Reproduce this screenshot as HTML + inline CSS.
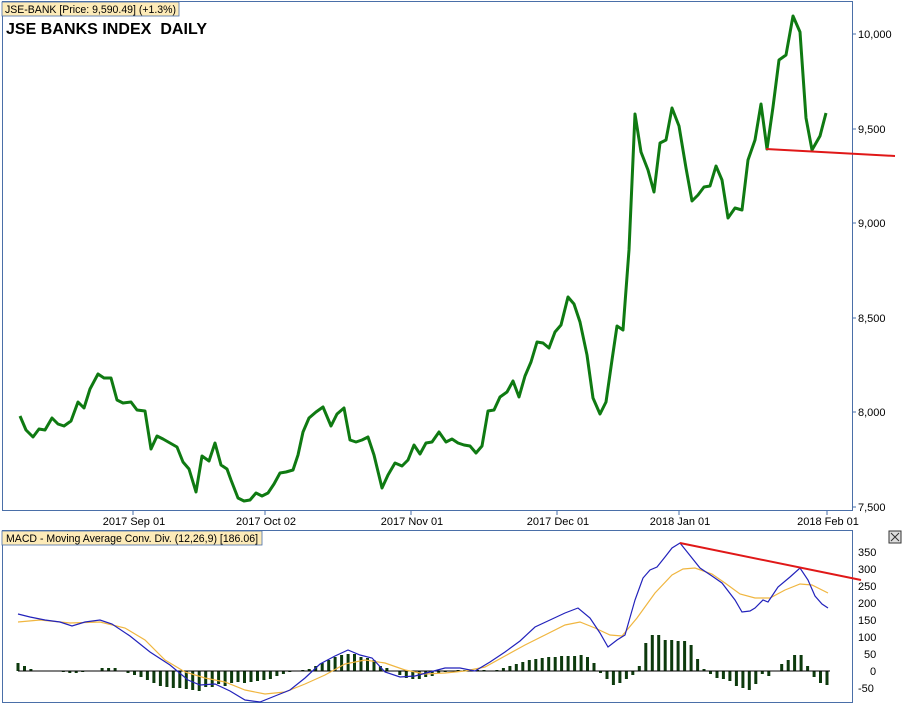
<!DOCTYPE html>
<html><head><meta charset="utf-8"><style>
html,body{margin:0;padding:0;background:#fff;width:902px;height:705px;overflow:hidden;font-family:"Liberation Sans",Arial,sans-serif}
svg{position:absolute;left:0;top:0}
</style></head><body>
<svg width="902" height="705" viewBox="0 0 902 705" xmlns="http://www.w3.org/2000/svg" font-family="Liberation Sans, Arial, sans-serif">
<rect x="0" y="0" width="902" height="705" fill="#fff"/>
<rect x="2.5" y="1.5" width="850" height="509" fill="#fff" stroke="#4a6fa8" stroke-width="1"/>
<rect x="2" y="2" width="177" height="14" fill="#fdebb8" stroke="#4a6fa8" stroke-width="0.8"/>
<text x="5" y="13" font-size="11" fill="#000" textLength="171" lengthAdjust="spacingAndGlyphs">JSE-BANK [Price: 9,590.49] (+1.3%)</text>
<text x="6" y="34" font-size="16" font-weight="bold" fill="#000" textLength="201" lengthAdjust="spacing" xml:space="preserve">JSE BANKS INDEX  DAILY</text>
<g font-size="11" fill="#000">
<line x1="852" y1="34" x2="856" y2="34" stroke="#4a6fa8"/><text x="858" y="38">10,000</text>
<line x1="852" y1="129" x2="856" y2="129" stroke="#4a6fa8"/><text x="858" y="133">9,500</text>
<line x1="852" y1="223" x2="856" y2="223" stroke="#4a6fa8"/><text x="858" y="227">9,000</text>
<line x1="852" y1="318" x2="856" y2="318" stroke="#4a6fa8"/><text x="858" y="322">8,500</text>
<line x1="852" y1="412" x2="856" y2="412" stroke="#4a6fa8"/><text x="858" y="416">8,000</text>
<line x1="852" y1="507" x2="856" y2="507" stroke="#4a6fa8"/><text x="858" y="511">7,500</text>
</g>
<g stroke="#4a6fa8">
<line x1="133" y1="511" x2="133" y2="515"/><line x1="265" y1="511" x2="265" y2="515"/><line x1="411" y1="511" x2="411" y2="515"/><line x1="557" y1="511" x2="557" y2="515"/><line x1="679" y1="511" x2="679" y2="515"/><line x1="827" y1="511" x2="827" y2="515"/>
</g>
<g font-size="11" fill="#000" text-anchor="middle">
<text x="134" y="525">2017 Sep 01</text><text x="266" y="525">2017 Oct 02</text><text x="412" y="525">2017 Nov 01</text><text x="558" y="525">2017 Dec 01</text><text x="680" y="525">2018 Jan 01</text><text x="828" y="525">2018 Feb 01</text>
</g>
<polyline fill="none" stroke="#0f7a12" stroke-width="3" stroke-linejoin="round" points="20,416 26,430 33,437 39,429 45,430 52,418 58,424 64,426 71,421 78,402 84,408 90,389 98,374 104,378 111,378 117,400 123,403 131,402 137,410 145,411 151,449 157,436 163,439 170,443 177,447 183,462 189,469 196,492 202,456 209,461 215,443 221,465 227,469 231,480 238,498 244,501 250,500 256,493 262,496 268,493 274,484 280,473 286,472 293,470 298,455 303,432 309,418 316,412 323,407 331,426 337,414 344,408 350,440 356,442 362,440 368,437 374,455 382,488 388,475 395,463 402,466 408,460 414,445 420,454 426,443 432,442 439,432 446,442 452,439 458,443 464,445 470,446 476,453 482,446 488,411 494,410 500,397 507,392 513,381 519,397 525,376 531,362 537,342 543,343 549,348 555,332 561,325 568,297 574,304 580,322 587,355 593,398 600,414 606,402 612,360 617,326 623,330 629,250 635,114 641,152 648,170 654,192 660,143 666,140 672,108 679,126 686,168 692,201 698,195 704,187 710,186 716,166 722,180 728,218 735,208 742,210 748,160 755,140 761,104 767,149 773,107 779,60 786,55 793,16 800,32 806,118 812,150 820,136 826,113"/>
<line x1="766" y1="149" x2="895" y2="156" stroke="#e01818" stroke-width="2"/>
<rect x="2.5" y="530.5" width="850" height="172" fill="#fff" stroke="#4a6fa8" stroke-width="1"/>
<rect x="2" y="531" width="260" height="14" fill="#fdebb8" stroke="#4a6fa8" stroke-width="0.8"/>
<text x="6" y="542" font-size="11" fill="#000" textLength="252" lengthAdjust="spacingAndGlyphs">MACD - Moving Average Conv. Div. (12,26,9) [186.06]</text>
<rect x="889" y="531" width="12" height="12" fill="#ddd" stroke="#333" stroke-width="1"/>
<path d="M891,533 L899,541 M899,533 L891,541" stroke="#333" stroke-width="1"/>
<g font-size="11" fill="#000">
<text x="858" y="556">350</text><text x="858" y="573">300</text><text x="858" y="590">250</text><text x="858" y="607">200</text><text x="858" y="624">150</text><text x="858" y="641">100</text><text x="864" y="658">50</text><text x="870" y="675">0</text><text x="858" y="692">-50</text>
</g>
<g id="hist" fill="#0d3a0d"></g>
<line x1="18" y1="671" x2="830" y2="671" stroke="#000" stroke-width="1"/>
<polyline fill="none" stroke="#f0b640" stroke-width="1.2" points="18,622 40,620 70,623 100,622 125,628 145,640 165,660 185,672 205,678 225,682 245,690 265,694 285,692 305,684 325,675 345,664 365,660 385,663 405,670 425,674 445,673 465,671 485,667 505,656 525,645 545,635 565,625 580,622 595,628 610,635 622,636 637,618 655,593 672,575 683,569 695,568 712,574 725,583 740,594 755,598 770,598 785,590 800,584 812,585 828,593"/>
<polyline fill="none" stroke="#2222bb" stroke-width="1.2" points="18,614 30,617 45,620 60,622 72,626 85,622 100,620 112,624 130,636 150,652 170,665 188,680 200,685 215,684 230,691 245,700 260,702 275,696 290,690 305,678 320,664 335,656 348,650 360,655 372,658 385,672 400,677 415,676 430,672 445,668 460,668 475,671 490,662 505,652 520,641 535,627 550,620 565,613 578,608 590,618 600,633 608,647 617,640 625,635 635,600 643,578 650,570 657,567 665,557 672,548 680,543 688,553 700,568 712,576 722,583 735,600 742,612 750,611 755,608 763,600 768,602 778,587 790,577 800,568 808,580 815,596 822,604 828,608"/>
<line x1="680" y1="543" x2="861" y2="580" stroke="#e01818" stroke-width="2"/>
</svg>
<script>
var h=[8,5,2,0,0,0,0,-1,-2,-2,-1,0,0,3,3,3,0,-2,-4,-6,-9,-12,-15,-16,-17,-17,-18,-19,-20,-16,-16,-13,-15,-12,-11,-12,-11,-10,-9,-8,-5,-3,-1,0,1,2,5,8,11,14,16,17,17,14,13,11,5,3,0,-4,-7,-8,-8,-6,-5,-2,-1,0,1,1,1,1,1,0,1,3,5,7,9,11,12,13,14,14,15,15,15,16,14,8,-2,-8,-14,-12,-8,-4,5,28,36,36,31,31,30,30,26,12,2,-3,-7,-8,-10,-15,-17,-19,-13,-3,-5,0,7,11,16,16,5,-6,-12,-14];
var g=document.getElementById('hist'),s='',n=h.length,x0=18,x1=827;
for(var i=0;i<n;i++){var x=x0+(x1-x0)*i/(n-1),v=h[i];if(!v)continue;var y=v>0?671-v:671;s+='<rect x="'+(x-1.5).toFixed(1)+'" y="'+y+'" width="3" height="'+Math.abs(v)+'"/>';}
g.innerHTML=s;
</script>
</body></html>
